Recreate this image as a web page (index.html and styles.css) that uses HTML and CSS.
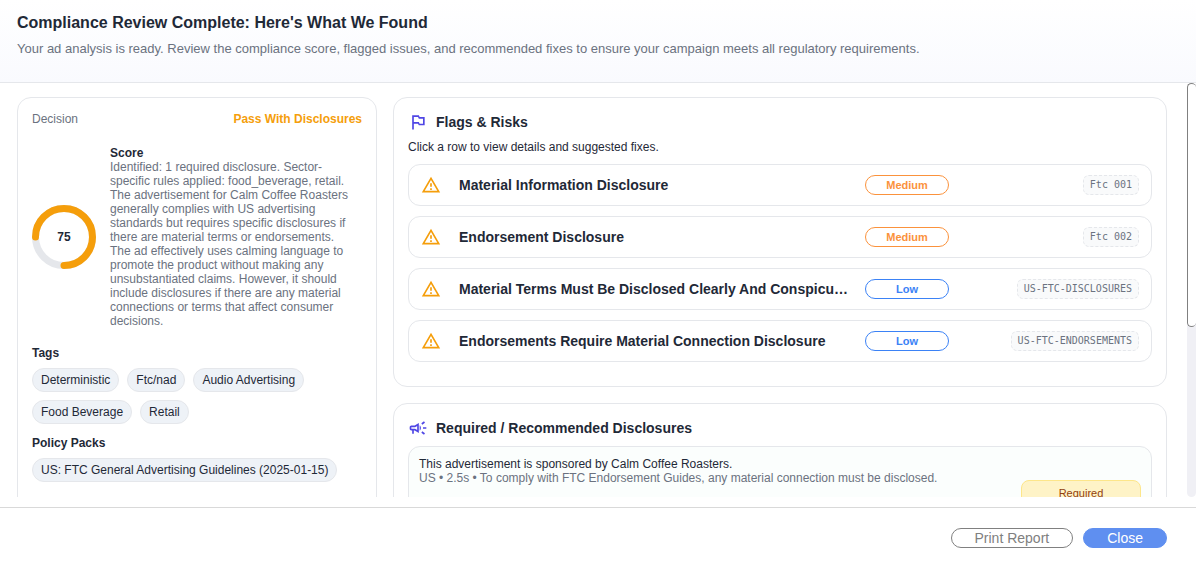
FILE: index.html
```html
<!DOCTYPE html>
<html lang="en">
<head>
    <meta charset="UTF-8">
    <meta name="viewport" content="width=device-width, initial-scale=1.0">
    <title>Compliance Review</title>
    <link rel="stylesheet" href="styles.css">
</head>
<body>
    <!-- Shared icons -->
    <svg class="sprite" aria-hidden="true">
        <symbol id="icon-warning" viewBox="0 0 24 24">
            <path d="M12 5.99L19.53 19H4.47L12 5.99M12 2L1 21h22L12 2zm1 14h-2v2h2v-2zm0-6h-2v4h2v-4z"/>
        </symbol>
    </svg>

    <header class="header">
        <h1>Compliance Review Complete: Here's What We Found</h1>
        <p>Your ad analysis is ready. Review the compliance score, flagged issues, and recommended fixes to ensure your campaign meets all regulatory requirements.</p>
    </header>

    <div class="scroll-area">
        <main class="content">
            <!-- Summary -->
            <section class="card summary">
                <div class="decision">
                    <span class="decision-label">Decision</span>
                    <strong class="decision-value">Pass With Disclosures</strong>
                </div>

                <div class="score">
                    <svg class="ring" viewBox="0 0 64 64" role="img" aria-label="Score 75">
                        <circle class="ring-track" cx="32" cy="32" r="28.5"/>
                        <circle class="ring-value" cx="32" cy="32" r="28.5" pathLength="100" transform="rotate(-180 32 32)"/>
                        <text x="32" y="36">75</text>
                    </svg>
                    <div class="score-text">
                        <h2>Score</h2>
                        <p>Identified: 1 required disclosure. Sector-specific rules applied: food_beverage, retail. The advertisement for Calm Coffee Roasters generally complies with US advertising standards but requires specific disclosures if there are material terms or endorsements. The ad effectively uses calming language to promote the product without making any unsubstantiated claims. However, it should include disclosures if there are any material connections or terms that affect consumer decisions.</p>
                    </div>
                </div>

                <h2>Tags</h2>
                <ul class="pills">
                    <li>Deterministic</li>
                    <li>Ftc/nad</li>
                    <li>Audio Advertising</li>
                    <li>Food Beverage</li>
                    <li>Retail</li>
                </ul>

                <h2>Policy Packs</h2>
                <ul class="pills">
                    <li>US: FTC General Advertising Guidelines (2025-01-15)</li>
                </ul>
            </section>

            <div class="column">
                <!-- Flags -->
                <section class="card flags">
                    <h2 class="card-title">
                        <svg class="icon" viewBox="0 0 24 24" aria-hidden="true">
                            <path d="M14 6l-1-2H5v17h2v-7h5l1 2h7V6h-6zm4 8h-4l-1-2H7V6h5l1 2h5v6z"/>
                        </svg>
                        Flags &amp; Risks
                    </h2>
                    <p class="hint">Click a row to view details and suggested fixes.</p>

                    <div class="flag-list">
                        <button type="button" class="flag">
                            <svg class="icon warning" aria-hidden="true"><use href="#icon-warning"/></svg>
                            <span class="flag-name">Material Information Disclosure</span>
                            <span class="severity medium">Medium</span>
                            <code>Ftc 001</code>
                        </button>
                        <button type="button" class="flag">
                            <svg class="icon warning" aria-hidden="true"><use href="#icon-warning"/></svg>
                            <span class="flag-name">Endorsement Disclosure</span>
                            <span class="severity medium">Medium</span>
                            <code>Ftc 002</code>
                        </button>
                        <button type="button" class="flag">
                            <svg class="icon warning" aria-hidden="true"><use href="#icon-warning"/></svg>
                            <span class="flag-name">Material Terms Must Be Disclosed Clearly And Conspicuously</span>
                            <span class="severity low">Low</span>
                            <code>US-FTC-DISCLOSURES</code>
                        </button>
                        <button type="button" class="flag">
                            <svg class="icon warning" aria-hidden="true"><use href="#icon-warning"/></svg>
                            <span class="flag-name">Endorsements Require Material Connection Disclosure</span>
                            <span class="severity low">Low</span>
                            <code>US-FTC-ENDORSEMENTS</code>
                        </button>
                    </div>
                </section>

                <!-- Disclosures -->
                <section class="card disclosures">
                    <h2 class="card-title">
                        <svg class="icon" viewBox="0 0 24 24" aria-hidden="true">
                            <path d="M18 11v2h4v-2h-4zM16 17.61c.96.71 2.21 1.65 3.2 2.39.4-.53.8-1.07 1.2-1.6-.99-.74-2.24-1.68-3.2-2.4-.4.54-.8 1.08-1.2 1.61zM20.4 5.6c-.4-.53-.8-1.07-1.2-1.6-.99.74-2.24 1.68-3.2 2.4.4.53.8 1.07 1.2 1.6.96-.72 2.21-1.65 3.2-2.4zM4 9c-1.1 0-2 .9-2 2v2c0 1.1.9 2 2 2h1v4h2v-4h1l5 3V6L8 9H4zm5.03 1.71L11 9.53v4.94l-1.97-1.18-.48-.29H4v-2h4.55l.48-.29zM15.5 12c0-1.33-.58-2.53-1.5-3.35v6.69c.92-.81 1.5-2.01 1.5-3.34z"/>
                        </svg>
                        Required / Recommended Disclosures
                    </h2>
                    <div class="disclosure">
                        <div class="disclosure-text">
                            <p>This advertisement is sponsored by Calm Coffee Roasters.</p>
                            <p class="muted">US • 2.5s • To comply with FTC Endorsement Guides, any material connection must be disclosed.</p>
                        </div>
                        <span class="required">Required</span>
                    </div>
                </section>
            </div>
        </main>
        <div class="scrollbar" aria-hidden="true">
            <div class="scrollbar-thumb"></div>
        </div>
    </div>

    <footer class="footer">
        <button type="button" class="button">Print Report</button>
        <button type="button" class="button primary">Close</button>
    </footer>
</body>
</html>
```
FILE: styles.css
```css
* {
    box-sizing: border-box;
}

body {
    font-family: "Liberation Sans", Arial, sans-serif;
    font-size: 12px;
    line-height: 14px;
    margin: 0;
    height: 100vh;
    display: flex;
    flex-direction: column;
    color: #1f2937;
    background: #fff;
}

h1, h2, p, ul {
    margin: 0;
    padding: 0;
}

h2 {
    font-size: 12px;
}

.sprite {
    display: none;
}

.header {
    padding: 12px 17px 22px;
    border-bottom: 1px solid #e5e7eb;
    background: linear-gradient(#fff, #f9fafe);
}

.header h1 {
    margin-bottom: 4px;
    font-size: 16px;
    line-height: 22px;
}

.header p {
    font-size: 13px;
    line-height: 22px;
    color: #6b7280;
}

/* Scrolling area */
.scroll-area {
    flex: 1;
    min-height: 0;
    margin-bottom: 10px;
    display: flex;
}

.content {
    flex: 1;
    min-width: 0;
    padding: 14px 20px 14px 17px;
    display: grid;
    grid-template-columns: 360px minmax(0, 1fr);
    gap: 16px;
    overflow-y: auto;
    scrollbar-width: none;
}

.scrollbar {
    width: 9px;
    flex-shrink: 0;
    border-radius: 5px;
    background: #f0f0f5;
}

.scrollbar-thumb {
    height: 59%;
    border: 1px solid #808080;
    border-right: none;
    border-radius: 5px;
    background: #fff;
}

.card {
    padding: 14px;
    border: 1px solid #e5e7eb;
    border-radius: 14px;
    background: #fff;
}

.column {
    display: flex;
    flex-direction: column;
    gap: 16px;
}

/* Summary card */
.decision {
    display: flex;
    justify-content: space-between;
    margin-bottom: 20px;
}

.decision-label {
    color: #6b7280;
}

.decision-value {
    color: #f59e0b;
}

.score {
    display: flex;
    align-items: center;
    gap: 14px;
    margin-bottom: 18px;
    padding-right: 12px;
}

.score-text {
    flex: 1;
}

.score-text p {
    color: #6b7280;
}

.ring {
    width: 64px;
    height: 64px;
    flex-shrink: 0;
}

.ring circle {
    fill: none;
    stroke-width: 7;
}

.ring .ring-track {
    stroke: #e5e7eb;
}

.ring .ring-value {
    stroke: #f59e0b;
    stroke-linecap: round;
    stroke-dasharray: 75 100;
}

.ring text {
    font-size: 12px;
    font-weight: bold;
    text-anchor: middle;
    fill: #1f2937;
}

.pills {
    display: flex;
    flex-wrap: wrap;
    gap: 8px;
    margin: 8px 0 12px;
    list-style: none;
}

.pills li {
    padding: 4px 8px;
    border: 1px solid #e5e7eb;
    border-radius: 12px;
    background: #eef2f7;
}

/* Cards on the right */
.card-title {
    display: flex;
    align-items: center;
    gap: 8px;
    font-size: 14px;
    line-height: 20px;
}

.icon {
    width: 20px;
    height: 20px;
    flex-shrink: 0;
    fill: #4f46e5;
}

.icon.warning {
    fill: #f59e0b;
}

.hint {
    margin: 8px 0 10px;
}

.flags {
    padding-bottom: 24px;
}

.flag-list {
    display: flex;
    flex-direction: column;
    gap: 10px;
}

.flag {
    display: grid;
    grid-template-columns: 22px minmax(0, 1fr) 84px 174px;
    align-items: center;
    gap: 16px;
    padding: 10px 12px;
    border: 1px solid #e5e7eb;
    border-radius: 12px;
    background: #fff;
    font-family: inherit;
    color: inherit;
    text-align: left;
    cursor: pointer;
}

.flag:hover {
    background: #f9fafb;
}

.flag-name {
    overflow: hidden;
    font-size: 14px;
    font-weight: bold;
    line-height: 20px;
    text-overflow: ellipsis;
    white-space: nowrap;
}

.severity {
    border: 1px solid;
    border-radius: 10px;
    font-size: 11px;
    font-weight: bold;
    line-height: 18px;
    text-align: center;
}

.medium {
    color: #fb923c;
}

.low {
    color: #3b82f6;
}

.flag code {
    justify-self: end;
    padding: 2px 6px;
    border: 1px dashed #e5e7eb;
    border-radius: 6px;
    background: #f9fafb;
    font-family: "DejaVu Sans Mono", monospace;
    font-size: 10px;
    line-height: 14px;
    color: #6b7280;
}

.disclosures {
    min-height: 370px;
}

.disclosure {
    display: flex;
    align-items: center;
    gap: 12px;
    min-height: 94px;
    margin-top: 8px;
    padding: 10px;
    border: 1px solid #e5e7eb;
    border-radius: 12px;
    background: #fbfefd;
}

.disclosure-text {
    flex: 1;
    align-self: flex-start;
}

.muted {
    color: #6b7280;
}

.required {
    width: 120px;
    padding: 5px 0;
    border: 1px solid #fde68a;
    border-radius: 8px;
    background: #fef3c7;
    font-size: 11px;
    text-align: center;
    color: #92400e;
}

/* Footer */
.footer {
    display: flex;
    justify-content: flex-end;
    gap: 10px;
    padding: 20px 29px 16px;
    border-top: 1px solid #d9d9d9;
}

.button {
    padding: 0 23px;
    border: 1px solid #808080;
    border-radius: 10px;
    background: #fff;
    font-family: inherit;
    font-size: 14px;
    line-height: 18px;
    color: #808080;
    cursor: pointer;
}

.button.primary {
    border-color: #5f8ff0;
    background: #5f8ff0;
    color: #fff;
}
```
